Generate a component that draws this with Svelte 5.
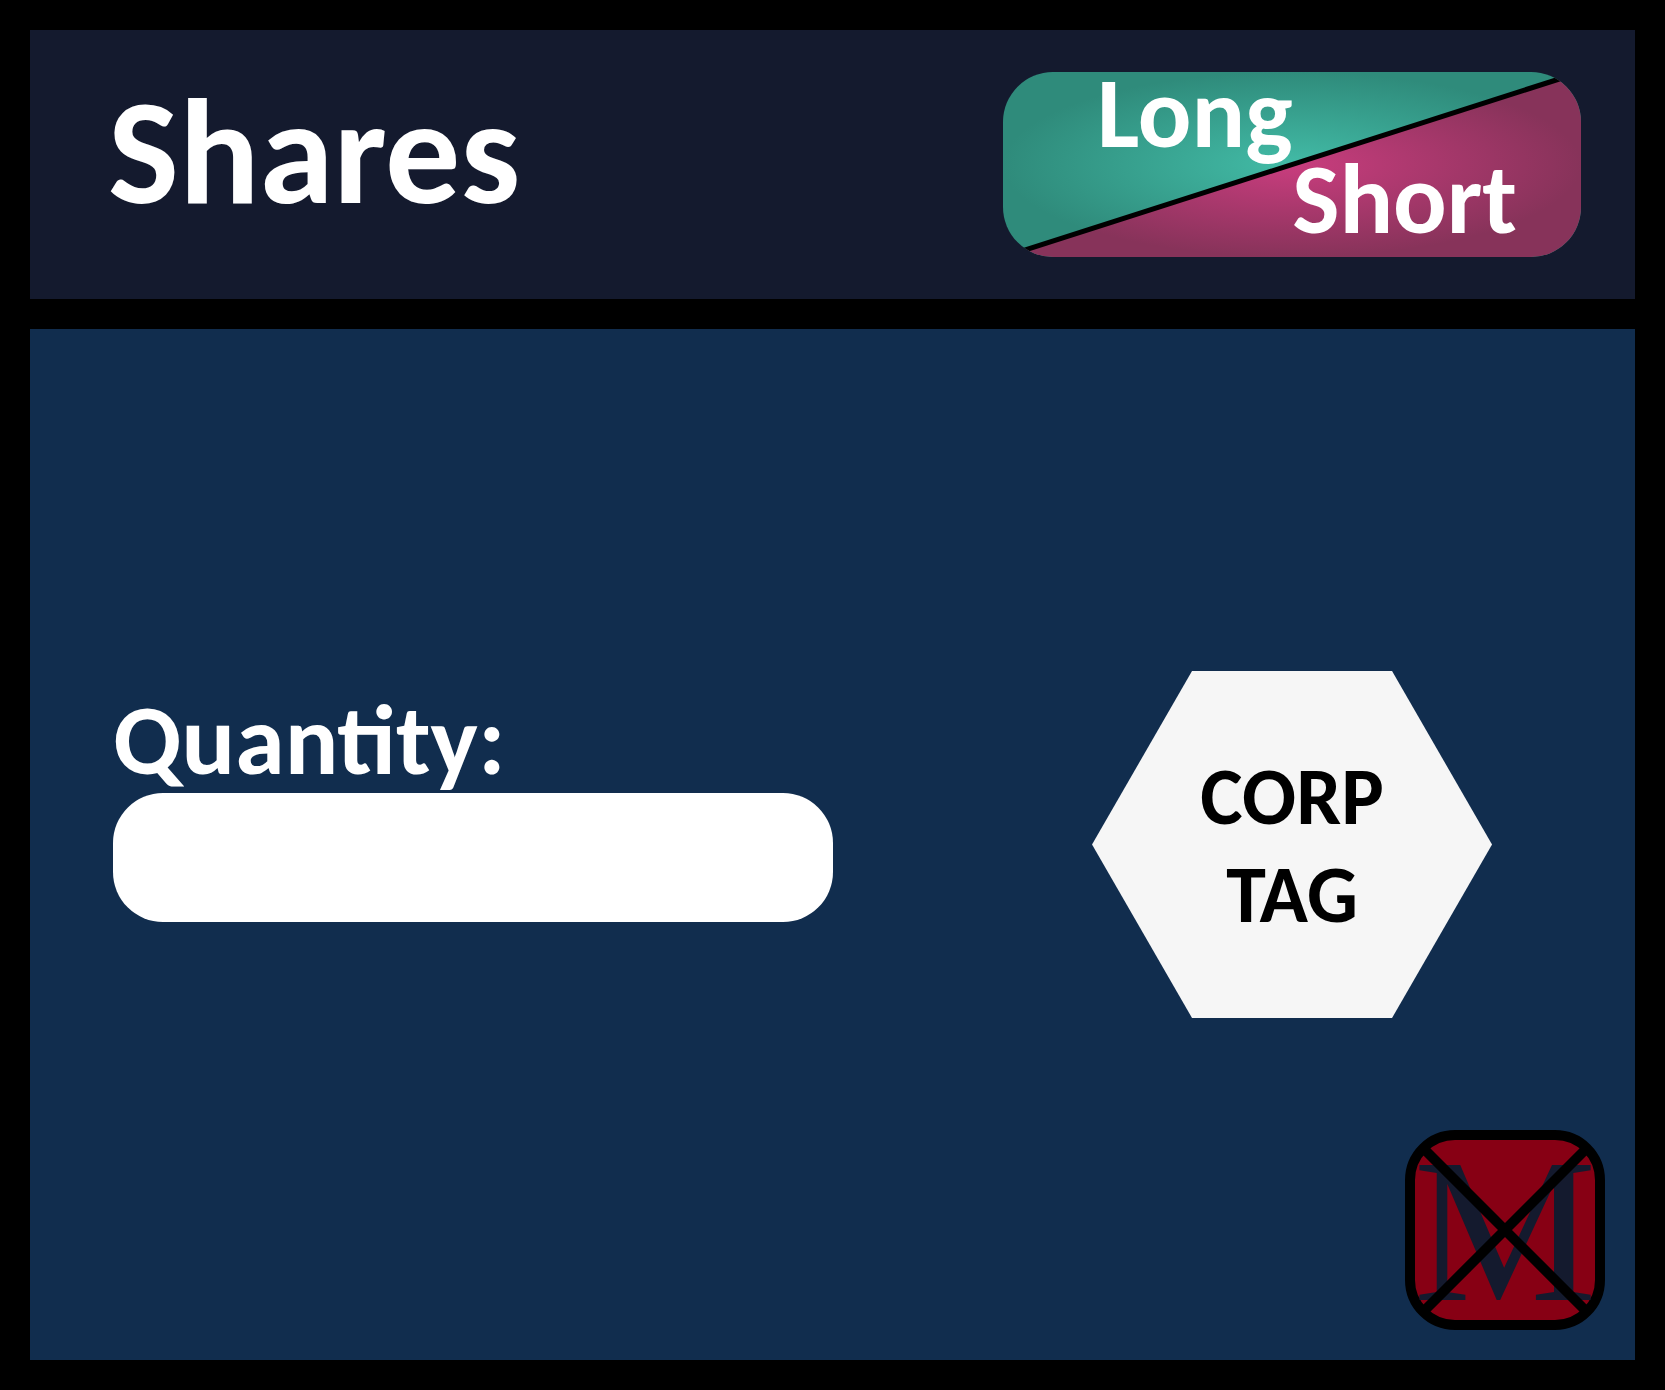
<script>
  let quantity = $state('');
</script>

<main class="page">
  <header class="header">
    <h1 class="title">Shares</h1>
    <div class="toggle-cell">
      <button class="toggle" type="button">
        <svg class="divider" viewBox="0 0 578 184" preserveAspectRatio="none" aria-hidden="true">
          <path d="M0 184L578 0" />
        </svg>
        <span class="long">Long</span>
        <span class="short">Short</span>
      </button>
    </div>
  </header>

  <section class="panel">
    <div class="field">
      <label class="label" for="quantity">Quantity:</label>
      <input class="input" id="quantity" type="text" bind:value={quantity} />
    </div>
    <div class="tag-cell">
      <div class="tag">
        <span>CORP</span>
        <span>TAG</span>
      </div>
    </div>
    <button class="close" type="button" aria-label="Close">
      <svg class="mark" viewBox="0 0 180 180" aria-hidden="true">
        <text class="letter" x="90" y="160" text-anchor="middle">M</text>
        <path class="cross" d="M7 7L173 173M173 7L7 173" />
      </svg>
    </button>
  </section>
</main>

<style>
  :global(body) {
    margin: 0;
    background: #000;
  }

  .page {
    box-sizing: border-box;
    min-height: 100vh;
    padding: 30px;
    display: grid;
    grid-template-rows: auto 1fr;
    gap: 30px;
    background: #000;
    color: #fff;
    font-family: Calibri, Carlito, Lato, sans-serif;
    font-weight: 700;
  }

  .header,
  .panel {
    display: grid;
    grid-template-columns: 1.34fr 1fr;
  }

  .header {
    min-height: 269px;
    align-items: center;
    background: #141a2e;
  }

  .title {
    margin: 0;
    padding: 0 0 26px 78px;
    font-size: 150px;
    line-height: 160px;
  }

  .toggle-cell,
  .tag-cell {
    display: flex;
    justify-content: center;
  }

  .toggle {
    box-sizing: border-box;
    width: 578px;
    height: 185px;
    padding: 0 64px 18px 94px;
    border: 0;
    border-radius: 50px;
    display: flex;
    flex-direction: column;
    justify-content: center;
    background: radial-gradient(closest-side, #42bba6, #2f8b7b);
    color: #fff;
    font: inherit;
    font-size: 100px;
    line-height: 86px;
    position: relative;
    isolation: isolate;
    cursor: pointer;
  }

  .toggle::before,
  .divider {
    position: absolute;
    inset: 0;
    z-index: -1;
    border-radius: 50px;
  }

  .toggle::before {
    content: '';
    background: radial-gradient(closest-side, #c93d7e, #87335a);
    clip-path: polygon(100% 0, 100% 100%, 0 100%);
  }

  .divider {
    width: 100%;
    height: 100%;
    overflow: hidden;
    stroke: #000;
    stroke-width: 5;
  }

  .long {
    align-self: flex-start;
  }

  .short {
    align-self: flex-end;
  }

  .panel {
    grid-template-rows: 1fr auto 1fr;
    background: #112d4e;
  }

  .field {
    grid-area: 2 / 1;
    display: flex;
    flex-direction: column;
    padding: 16px 116px 0 83px;
  }

  .label {
    font-size: 100px;
    line-height: 106px;
  }

  .input {
    box-sizing: border-box;
    width: 100%;
    height: 129px;
    padding: 0 40px;
    border: 0;
    border-radius: 50px;
    background: #fff;
    color: #000;
    font: inherit;
    font-size: 80px;
  }

  .tag-cell {
    grid-area: 2 / 2;
  }

  .tag {
    box-sizing: border-box;
    width: 400px;
    height: 347px;
    padding-top: 2px;
    display: flex;
    flex-direction: column;
    align-items: center;
    justify-content: center;
    background: #f6f6f6;
    clip-path: polygon(25% 0, 75% 0, 100% 50%, 75% 100%, 25% 100%, 0 50%);
    color: #000;
    font-size: 80px;
    line-height: 98px;
  }

  .close {
    grid-area: 3 / 2;
    place-self: end;
    box-sizing: border-box;
    width: 200px;
    height: 200px;
    margin: 30px;
    padding: 0;
    border: 10px solid #000;
    border-radius: 50px;
    background: #870014;
    cursor: pointer;
  }

  .mark {
    display: block;
    width: 100%;
    height: 100%;
    overflow: visible;
  }

  .letter {
    fill: #141a2e;
    font-family: 'Liberation Serif', serif;
    font-size: 206px;
    font-weight: 400;
  }

  .cross {
    fill: none;
    stroke: #000;
    stroke-width: 10;
  }
</style>
